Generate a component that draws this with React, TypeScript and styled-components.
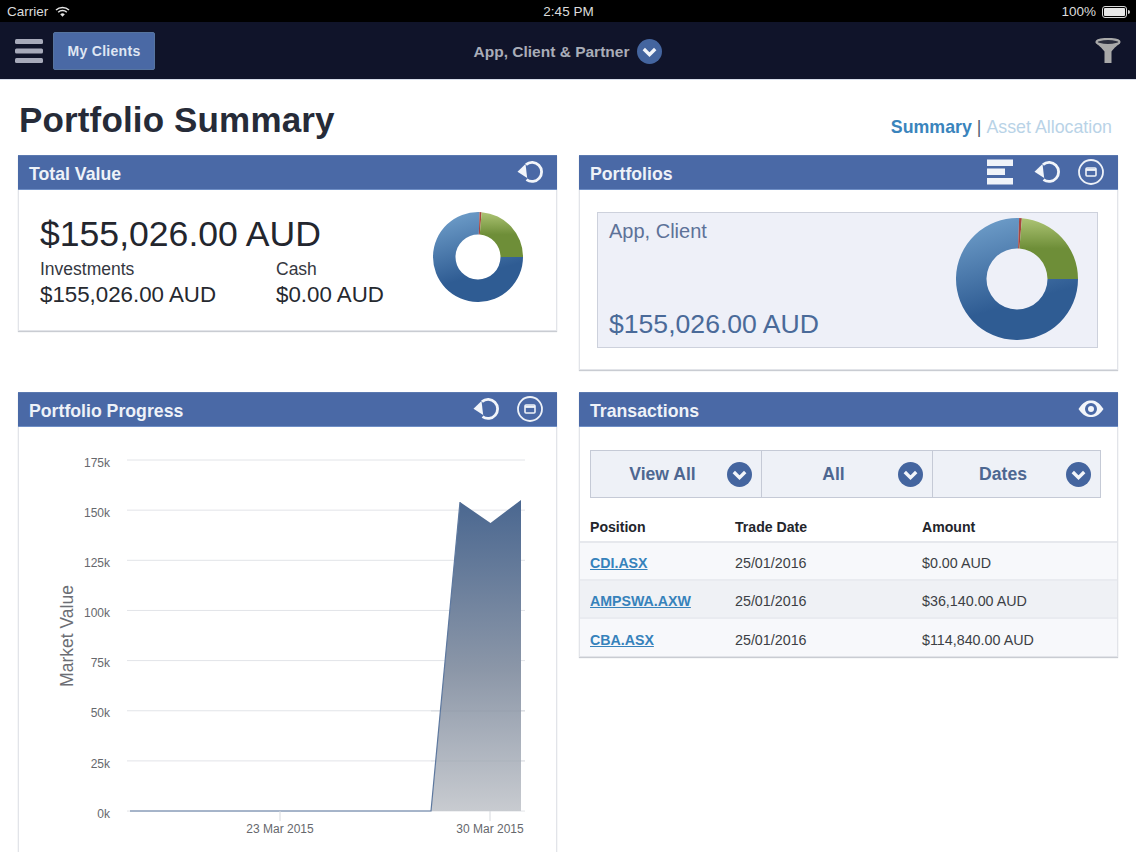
import React from "react";
import styled, { createGlobalStyle } from "styled-components";

const Global = createGlobalStyle`
  html, body { margin: 0; padding: 0; background: #fff; }
  body { font-family: "Liberation Sans", Arial, sans-serif; }
`;
const Page = styled.div`
  width: 1136px; height: 852px; overflow: hidden; background: #fff; display: flex; flex-direction: column;
`;
const StatusBar = styled.div`
  height: 22px; box-sizing: border-box; padding: 1px 6px 0 7px; background: #000; color: #dcdcdc; font-size: 13.5px; display: grid;
  grid-template-columns: 1fr auto 1fr; align-items: center; flex: none;
`;
const StatusLeft = styled.div`display: flex; align-items: center; gap: 7px;`;
const StatusRight = styled.div`display: flex; align-items: center; justify-content: flex-end; gap: 6px;`;
const NavBar = styled.div`
  height: 57px; background: #10142a; border-bottom: 1px solid #d8deea; display: grid;
  grid-template-columns: 1fr auto 1fr; align-items: center; padding: 0 15px; flex: none;
`;
const NavLeft = styled.div`display: flex; align-items: center; gap: 10px;`;
const NavRight = styled.div`display: flex; justify-content: flex-end;`;
const MyClients = styled.button`
  width: 102px; height: 38px; margin-top: 1px; background: #4a69a5; border: 1px solid #56749f; border-radius: 2px; padding: 0;
  color: #dfe6f3; font: bold 14px "Liberation Sans", Arial, sans-serif; letter-spacing: .3px;
`;
const NavCenter = styled.div`
  display: flex; align-items: center; gap: 8px; color: #a9adb8; font-size: 15.5px; font-weight: bold; margin-top: 2px;
`;
const Heading = styled.div`
  height: 75px; display: flex; justify-content: space-between; align-items: flex-start; padding: 0 24px 0 19px; flex: none;
`;
const Title = styled.h1`
  margin: 19px 0 0; font-size: 35px; line-height: 42px; font-weight: bold; color: #262b38; letter-spacing: .15px;
`;
const Tabs = styled.div`
  margin-top: 36px; font-size: 17.8px; line-height: 22px; display: flex; gap: 5px; color: #b9d3e7;
`;
const ActiveTab = styled.span`font-weight: bold; color: #3a84bc;`;
const TabSep = styled.span`color: #53606f;`;
const Grid = styled.div`
  display: grid; grid-template-columns: 539px 539px; column-gap: 22px; row-gap: 22px; padding: 0 18px;
  grid-template-rows: 215px auto; align-items: start;
`;
const Panel = styled.section<{ $tall?: boolean }>`
  background: #fff; border: solid #e2e4e9; border-width: 0 1px 1px; box-shadow: 0 1px 1px #c9ccd2;
  ${p => p.$tall && "height: 214px;"}
`;
const PanelHead = styled.div`
  height: 35px; margin: 0 -1px; background: #4a69a6; border-top: 1px solid #5b79b0; border-bottom: 1px solid #6f8fc6;
  box-sizing: border-box; color: #eef2f8; display: flex; align-items: center; justify-content: space-between;
  padding: 4px 14px 0 11px; font-size: 17.7px; font-weight: bold;
`;
const HeadIcons = styled.div`display: flex; align-items: center; gap: 18px; margin-top: -6px;`;
const ValueBody = styled.div`
  height: 140px; display: flex; justify-content: space-between; padding: 0 33px 0 21px; box-sizing: border-box;
`;
const BigValue = styled.div`font-size: 35.6px; line-height: 40px; color: #23262e; margin-top: 24px;`;
const Pair = styled.div`display: flex; margin-top: 5px;`;
const PairCol = styled.div<{ $w: number }>`width: ${p => p.$w}px;`;
const PairLabel = styled.div`font-size: 17.5px; line-height: 21px; color: #35383f;`;
const PairValue = styled.div`font-size: 22.3px; line-height: 29px; color: #26292f;`;
const DonutSlot = styled.div<{ $top: number }>`margin-top: ${p => p.$top}px; display: flex;`;
const InnerBox = styled.div`
  margin: 22px 19px 0 17px; height: 136px; box-sizing: border-box; background: #eef0f8; border: 1px solid #cdd1dc;
  display: flex; justify-content: space-between; padding: 0 19px 0 11px;
`;
const InnerText = styled.div`display: flex; flex-direction: column; justify-content: space-between; padding: 6px 0 7px;`;
const InnerName = styled.div`font-size: 20px; line-height: 24px; color: #5d7298;`;
const InnerValue = styled.div`font-size: 26.6px; line-height: 32px; color: #4a6a99;`;
const ChartBody = styled.div`height: 430px;`;
const ChartSvg = styled.svg`display: block;`;
const Filters = styled.div`
  margin: 23px 16px 0 10px; height: 48px; box-sizing: border-box; border: 1px solid #c5cad6; background: #eef1f7; display: flex;
`;
const Filter = styled.div`
  flex: 0 0 171px; box-sizing: border-box; display: flex; align-items: center; padding: 0 9px 0 7px; color: #4d6791; font-size: 17.6px; font-weight: bold;
  & + & { border-left: 1px solid #c5cad6; }
  &:first-child { flex-basis: 170px; }
  &:last-child { flex: 1; }
`;
const FilterLabel = styled.span`flex: 1; text-align: center;`;
const Table = styled.div`margin-top: 17px;`;
const Row = styled.div<{ $bg?: string; $head?: boolean }>`
  display: grid; grid-template-columns: 145px 187px 1fr; align-items: center; padding: ${p => (p.$head ? "0 0 3px 10px" : "4px 0 0 10px")};
  height: ${p => (p.$head ? "28px" : "38px")}; box-sizing: border-box;
  background: ${p => p.$bg || "#fff"};
  border-bottom: 2px solid ${p => (p.$head ? "#e6e8ed" : "#e9ebf0")};
  font-size: ${p => (p.$head ? "14.1px" : "14.3px")}; color: ${p => (p.$head ? "#23252b" : "#3c3f45")};
  font-weight: ${p => (p.$head ? "bold" : "normal")};
  &:last-child { height: 37px; border-bottom: 0; }
`;
const Link = styled.a`color: #3682bb; font-weight: bold; font-size: 14.2px; text-decoration: underline;`;

const Refresh = () => (
  <svg width="26" height="24" viewBox="0 0 26 24">
    <path d="M9 4.6 A9.5 9.5 0 1 1 9.5 19.6" fill="none" stroke="#f2f5fa" strokeWidth="2.8" />
    <path d="M0.5 11.8 L8.5 4 L10.2 18 Z" fill="#f2f5fa" />
  </svg>
);
const Restore = () => (
  <svg width="26" height="26" viewBox="0 0 26 26">
    <circle cx="13" cy="13" r="12" fill="none" stroke="#eef2f8" strokeWidth="1.8" />
    <rect x="8" y="9" width="10" height="8" rx="1" fill="none" stroke="#eef2f8" strokeWidth="1.6" />
    <path d="M8 10.8h10" stroke="#eef2f8" strokeWidth="2.2" />
  </svg>
);
const Bars = () => (
  <svg width="29" height="26" viewBox="0 0 29 26">
    <rect x="0" y="0.5" width="26" height="6.5" fill="#f0f3f9" />
    <rect x="0" y="9.5" width="18" height="6.5" fill="#f0f3f9" />
    <rect x="0" y="19" width="26" height="6.5" fill="#f0f3f9" />
  </svg>
);
const Eye = () => (
  <svg width="26" height="18" viewBox="0 0 26 18">
    <path fillRule="evenodd" fill="#f2f5fa" d="M0.5 9 C5 2 9 0.5 13 0.5 S21 2 25.5 9 C21 15.5 17 17 13 17 S5 15.5 0.5 9 Z M13 3 A6 6 0 1 0 13 15 A6 6 0 1 0 13 3 Z M13 6 A3 3 0 1 1 13 12 A3 3 0 1 1 13 6 Z" />
  </svg>
);
const Chevron = () => (
  <svg width="25" height="25" viewBox="0 0 25 25" style={{ flex: "none" }}>
    <circle cx="12.5" cy="12.5" r="12.5" fill="#44659f" />
    <path d="M6.8 10 L12.5 15.6 L18.2 10" fill="none" stroke="#f2f5fa" strokeWidth="3.4" />
  </svg>
);
const Hamburger = () => (
  <svg width="28" height="24" viewBox="0 0 28 24">
    <rect y="0" width="28" height="5" rx="1.5" fill="#a7aaba" />
    <rect y="9.5" width="28" height="5" rx="1.5" fill="#a7aaba" />
    <rect y="19" width="28" height="5" rx="1.5" fill="#a7aaba" />
  </svg>
);
const Funnel = () => (
  <svg width="26" height="25" viewBox="0 0 26 25">
    <ellipse cx="13" cy="4" rx="11.5" ry="3" fill="#2a2d3c" stroke="#a9a9a9" strokeWidth="2.2" />
    <path d="M1 5 C4 8 6 9 9.5 13.5 V25 H16.5 V13.5 C20 9 22 8 25 5 C20 8 6 8 1 5 Z" fill="#a9a9a9" />
  </svg>
);
const Wifi = () => (
  <svg width="15" height="11" viewBox="0 0 15 11">
    <path d="M1 4 A9.5 9.5 0 0 1 14 4" fill="none" stroke="#e6e6e6" strokeWidth="1.5" />
    <path d="M3.2 6.2 A6.3 6.3 0 0 1 11.8 6.2" fill="none" stroke="#e6e6e6" strokeWidth="1.5" />
    <path d="M5.2 8.2 A3.4 3.4 0 0 1 9.8 8.2 L7.5 10.8 Z" fill="#e6e6e6" />
  </svg>
);
const Battery = () => (
  <svg width="28" height="12" viewBox="0 0 28 12">
    <rect x=".5" y=".5" width="24" height="11" rx="2.5" fill="none" stroke="#d8d8d8" />
    <rect x="2" y="2" width="21" height="8" rx="1" fill="#e8e8e8" />
    <path d="M26 4 a2 2 0 0 1 0 4 Z" fill="#d8d8d8" />
  </svg>
);

const polar = (cx: number, cy: number, r: number, deg: number) => {
  const a = ((deg - 90) * Math.PI) / 180;
  return `${(cx + r * Math.cos(a)).toFixed(2)} ${(cy + r * Math.sin(a)).toFixed(2)}`;
};
const wedge = (c: number, R: number, r: number, from: number, to: number) => {
  const large = to - from > 180 ? 1 : 0;
  return `M${polar(c, c, R, from)} A${R} ${R} 0 ${large} 1 ${polar(c, c, R, to)} L${polar(c, c, r, to)} A${r} ${r} 0 ${large} 0 ${polar(c, c, r, from)} Z`;
};
const Donut = ({ id, R, r }: { id: string; R: number; r: number }) => (
  <svg width={R * 2} height={R * 2} viewBox={`0 0 ${R * 2} ${R * 2}`}>
    <defs>
      <linearGradient id={`${id}b`} x1="0.3" y1="0" x2="0.5" y2="0.7">
        <stop offset="0" stopColor="#6d9cc8" />
        <stop offset="1" stopColor="#2f5c93" />
      </linearGradient>
      <linearGradient id={`${id}g`} x1="0" y1="0" x2="0" y2="0.5">
        <stop offset="0" stopColor="#adc474" />
        <stop offset="1" stopColor="#6e8e38" />
      </linearGradient>
    </defs>
    <path d={wedge(R, R, r, 90, 362)} fill={`url(#${id}b)`} />
    <path d={wedge(R, R, r, 2, 4.6)} fill="#a8453f" />
    <path d={wedge(R, R, r, 4.6, 90)} fill={`url(#${id}g)`} />
  </svg>
);

const ticks = ["175k", "150k", "125k", "100k", "75k", "50k", "25k", "0k"];
const axisText = { fontFamily: "Liberation Sans, Arial, sans-serif", fontSize: 12, fill: "#66686d" };
const Chart = () => (
  <ChartSvg width="537" height="425" viewBox="19 427 537 425">
    <defs>
      <linearGradient id="area" x1="0" y1="0" x2="0" y2="1">
        <stop offset="0" stopColor="#4a6790" />
        <stop offset="0.55" stopColor="#8c97a8" />
        <stop offset="1" stopColor="#c8cbd0" />
      </linearGradient>
    </defs>
    {ticks.map((t, i) => {
      const y = 460 + i * 50.15;
      return (
        <g key={t}>
          <line x1="127" x2="525" y1={y} y2={y} stroke="#e2e4e8" strokeWidth="1" />
          <text x="110" y={y + 6.6} textAnchor="end" {...axisText}>{t}</text>
        </g>
      );
    })}
    <path d="M431 811 L460 502 L490.5 523 L521 500 V811 Z" fill="url(#area)" />
    <line x1="431" x2="525" y1="711" y2="711" stroke="#8c93a0" strokeOpacity=".25" />
    <line x1="431" x2="525" y1="761" y2="761" stroke="#8c93a0" strokeOpacity=".15" />
    <path d="M130 811 H431 L460 502" fill="none" stroke="#5d789f" strokeWidth="1.2" />
    <line x1="280" x2="280" y1="811" y2="821" stroke="#d5d8dd" />
    <line x1="490" x2="490" y1="811" y2="821" stroke="#d5d8dd" />
    <text x="280" y="833" textAnchor="middle" {...axisText}>23 Mar 2015</text>
    <text x="490" y="833" textAnchor="middle" {...axisText}>30 Mar 2015</text>
    <text transform="translate(73 636) rotate(-90)" textAnchor="middle" fontFamily="Liberation Sans, Arial, sans-serif" fontSize="17.5" fill="#6c6e74">Market Value</text>
  </ChartSvg>
);

const rows = [
  { p: "CDI.ASX", a: "$0.00 AUD", bg: "#f7f8fb" },
  { p: "AMPSWA.AXW", a: "$36,140.00 AUD", bg: "#eff1f5" },
  { p: "CBA.ASX", a: "$114,840.00 AUD", bg: "#f7f8fb" },
];

export default function App() {
  return (
    <Page>
      <Global />
      <StatusBar>
        <StatusLeft>Carrier <Wifi /></StatusLeft>
        <span>2:45 PM</span>
        <StatusRight>100% <Battery /></StatusRight>
      </StatusBar>
      <NavBar>
        <NavLeft><Hamburger /><MyClients>My Clients</MyClients></NavLeft>
        <NavCenter>App, Client &amp; Partner <Chevron /></NavCenter>
        <NavRight><Funnel /></NavRight>
      </NavBar>
      <Heading>
        <Title>Portfolio Summary</Title>
        <Tabs><ActiveTab>Summary</ActiveTab><TabSep>|</TabSep><span>Asset Allocation</span></Tabs>
      </Heading>
      <Grid>
        <Panel>
          <PanelHead>Total Value<HeadIcons><Refresh /></HeadIcons></PanelHead>
          <ValueBody>
            <div>
              <BigValue>$155,026.00 AUD</BigValue>
              <Pair>
                <PairCol $w={236}><PairLabel>Investments</PairLabel><PairValue>$155,026.00 AUD</PairValue></PairCol>
                <PairCol $w={120}><PairLabel>Cash</PairLabel><PairValue>$0.00 AUD</PairValue></PairCol>
              </Pair>
            </div>
            <DonutSlot $top={22}><Donut id="d1" R={45} r={22.5} /></DonutSlot>
          </ValueBody>
        </Panel>
        <Panel $tall>
          <PanelHead>Portfolios<HeadIcons><Bars /><Refresh /><Restore /></HeadIcons></PanelHead>
          <InnerBox>
            <InnerText><InnerName>App, Client</InnerName><InnerValue>$155,026.00 AUD</InnerValue></InnerText>
            <DonutSlot $top={5}><Donut id="d2" R={61} r={30.5} /></DonutSlot>
          </InnerBox>
        </Panel>
        <Panel>
          <PanelHead>Portfolio Progress<HeadIcons><Refresh /><Restore /></HeadIcons></PanelHead>
          <ChartBody><Chart /></ChartBody>
        </Panel>
        <Panel>
          <PanelHead>Transactions<HeadIcons><Eye /></HeadIcons></PanelHead>
          <Filters>
            <Filter><FilterLabel>View All</FilterLabel><Chevron /></Filter>
            <Filter><FilterLabel>All</FilterLabel><Chevron /></Filter>
            <Filter><FilterLabel>Dates</FilterLabel><Chevron /></Filter>
          </Filters>
          <Table>
            <Row $head><span>Position</span><span>Trade Date</span><span>Amount</span></Row>
            {rows.map(r => (
              <Row key={r.p} $bg={r.bg}><span><Link href="#">{r.p}</Link></span><span>25/01/2016</span><span>{r.a}</span></Row>
            ))}
          </Table>
        </Panel>
      </Grid>
    </Page>
  );
}
